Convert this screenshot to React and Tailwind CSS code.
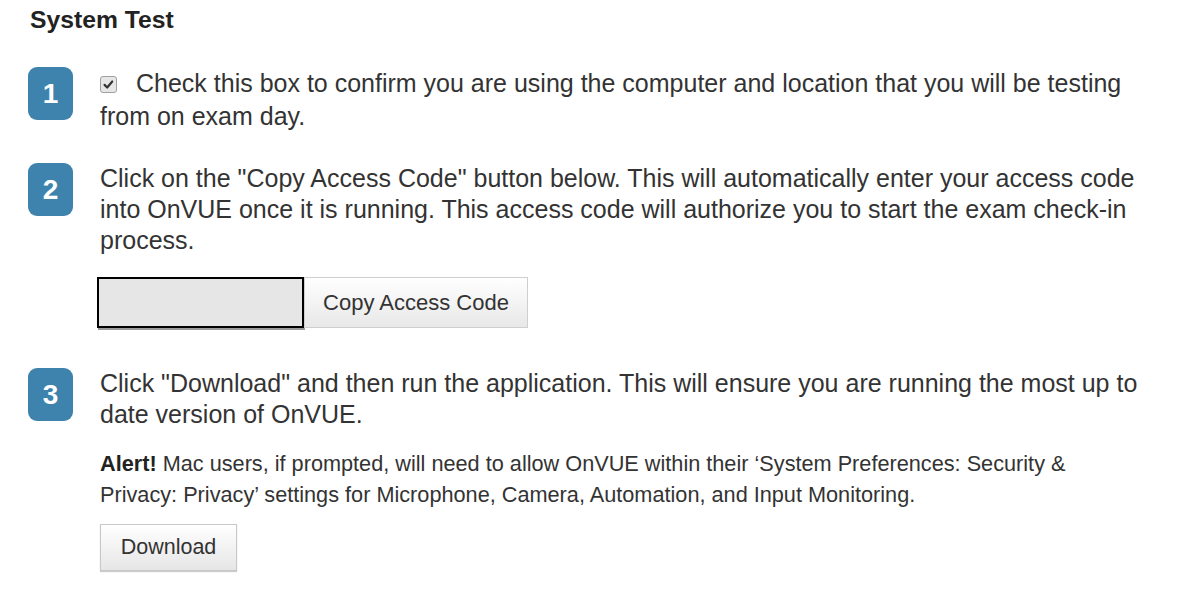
import React from "react";

function Badge({ n }) {
  return (
    <div className="shrink-0 w-[45px] h-[53px] rounded-[9px] bg-[#3e83ad] text-white flex items-center justify-center text-[28px] font-bold leading-none">
      {n}
    </div>
  );
}

export default function App() {
  return (
    <div
      className="w-[1202px] h-[593px] bg-white text-[#333] pl-[28px] pt-[6px]"
      style={{ fontFamily: '"Liberation Sans", Arial, sans-serif' }}
    >
      <h1 className="text-[24.7px] font-bold text-[#222] leading-[28px] pl-[2px]">System Test</h1>

      <div className="mt-[33px] flex items-start gap-[27px]">
        <Badge n="1" />
        <p className="w-[1050px] text-[25px] leading-[33px]">
          <span className="inline-block align-[-1px] mr-[19px] w-[17px] h-[17px] rounded-[3px] border border-[#a0a0a0] bg-[#e6e6e6] relative">
            <svg viewBox="0 0 16 16" className="absolute inset-0 w-full h-full">
              <path d="M3.8 8.4 L6.6 11.2 L12 4.8" fill="none" stroke="#333" strokeWidth="2.3" strokeLinecap="round" strokeLinejoin="round" />
            </svg>
          </span>
          Check this box to confirm you are using the computer and location that you will be testing from on exam day.
        </p>
      </div>

      <div className="mt-[30px] flex items-start gap-[27px]">
        <Badge n="2" />
        <div className="w-[1050px]">
          <p className="text-[25px] leading-[31px]">
            Click on the "Copy Access Code" button below. This will automatically enter your access code into OnVUE once it is running. This access code will authorize you to start the exam check-in process.
          </p>
          <div className="mt-[21px] flex -ml-[3px]">
            <div className="w-[207px] h-[51px] border-2 border-black bg-[#e6e6e6] shadow-[1px_2px_0_#9a9a9a]"></div>
            <button className="w-[224px] h-[51px] border border-[#cfcfcf] bg-gradient-to-b from-white to-[#e8e8e8] text-[22px] text-[#333]">
              Copy Access Code
            </button>
          </div>
        </div>
      </div>

      <div className="mt-[40px] flex items-start gap-[27px]">
        <Badge n="3" />
        <div className="w-[1050px]">
          <p className="text-[25px] leading-[31px]">
            Click "Download" and then run the application. This will ensure you are running the most up to date version of OnVUE.
          </p>
          <p className="mt-[18px] w-[1025px] text-[21.7px] leading-[31px]">
            <span className="font-bold text-[#222]">Alert!</span> Mac users, if prompted, will need to allow OnVUE within their ‘System Preferences: Security &amp; Privacy: Privacy’ settings for Microphone, Camera, Automation, and Input Monitoring.
          </p>
          <button className="mt-[14px] w-[137px] h-[47px] border border-[#c8c8c8] bg-gradient-to-b from-white to-[#e6e6e6] text-[21.5px] text-[#333] shadow-[0_1px_1px_#ccc]">
            Download
          </button>
        </div>
      </div>
    </div>
  );
}
